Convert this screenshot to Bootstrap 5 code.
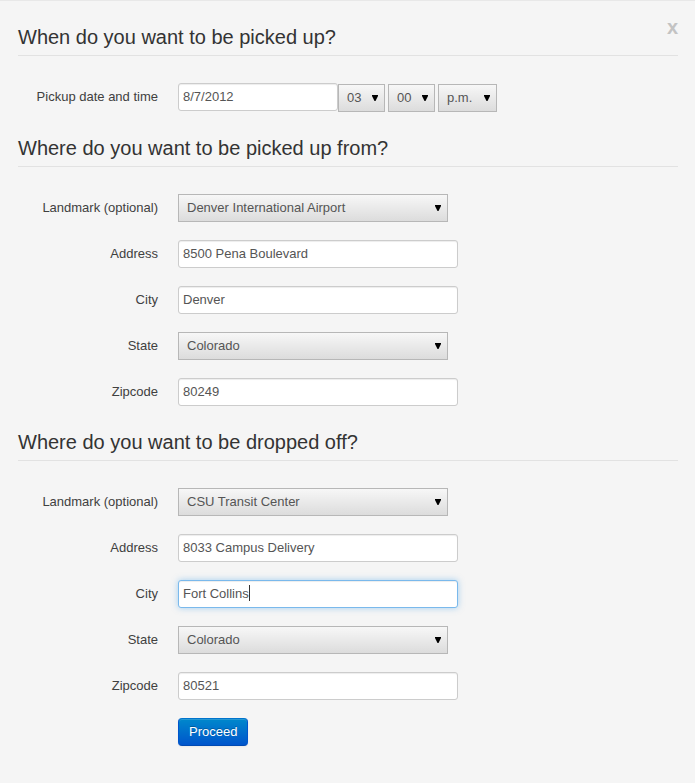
<!DOCTYPE html>
<html lang="en">
<head>
<meta charset="utf-8">
<meta name="viewport" content="width=device-width, initial-scale=1">
<title>Book a ride</title>
<link href="https://cdn.jsdelivr.net/npm/bootstrap@5.3.0/dist/css/bootstrap.min.css" rel="stylesheet">
<style>
body { background: #f5f5f5; color: #333; font: 13px/18px "Liberation Sans", Arial, sans-serif; }
.booking { padding: 18px 17px 36px 18px; border-top: 1px solid #e8e8e8; }
.section-title { font-size: 20px; line-height: 36px; color: #333; border-bottom: 1px solid #e2e2e2; margin-bottom: 27px; }
.field-row { display: flex; align-items: flex-start; gap: 20px; margin-bottom: 18px; }
.field-label { flex: 0 0 140px; text-align: right; padding-top: 5px; color: #404040; }
.form-control.field-text { width: 280px; height: 28px; padding: 3px 4px 5px; font-size: 13px; line-height: 18px; color: #555; border: 1px solid #ccc; border-radius: 3px; box-shadow: inset 0 1px 1px rgba(0,0,0,.075); }
.form-control.field-date { width: 160px; }
.form-control.field-active { border-color: #7ab9ec; box-shadow: inset 0 1px 1px rgba(0,0,0,.075), 0 0 6px rgba(82,168,236,.5); background: linear-gradient(#333, #333) 70px 4px / 1px 16px no-repeat #fff; }
.form-select.field-pick { width: 270px; height: 28px; padding: 0 18px 0 8px; font-size: 13px; line-height: 18px; color: #555; border: 1px solid #b7b7b7; border-radius: 0;
  background: url("data:image/svg+xml,%3Csvg xmlns='http://www.w3.org/2000/svg' viewBox='0 0 6 6'%3E%3Cpath d='M0 0h6v1L3.5 6h-1L0 1z'/%3E%3C/svg%3E") right 6px center / 6px 6px no-repeat, linear-gradient(#f7f7f7, #dcdcdc); }
.form-select.pick-number { width: 47px; }
.form-select.pick-period { width: 59px; }
.time-picks { gap: 3px; padding-top: 1px; }
.submit-row { padding-left: 160px; }
.btn.proceed { height: 28px; padding: 4px 10px; font-size: 13px; line-height: 18px; color: #fff; text-shadow: 0 -1px 0 rgba(0,0,0,.25); border: 1px solid; border-color: #0074cc #05c #004ab3; border-radius: 4px; background: linear-gradient(#08c, #05c); box-shadow: inset 0 1px 0 rgba(255,255,255,.15), 0 1px 2px rgba(0,0,0,.05); }
.dismiss { top: 17px; right: 17px; font-size: 20px; line-height: 18px; font-weight: 700; color: #c3c3c3; }
</style>
<script src="https://cdn.jsdelivr.net/npm/bootstrap@5.3.0/dist/js/bootstrap.bundle.min.js" defer></script>
</head>
<body>
<form class="booking position-relative">
  <button type="button" class="dismiss position-absolute border-0 bg-transparent p-0" aria-label="Close">x</button>
  <fieldset>
    <legend class="section-title float-none">When do you want to be picked up?</legend>
    <div class="field-row">
      <label class="field-label" for="pickup-date">Pickup date and time</label>
      <div class="d-flex">
        <input class="form-control field-text field-date" id="pickup-date" type="text" value="8/7/2012">
        <div class="time-picks d-flex">
          <select class="form-select field-pick pick-number" aria-label="Hour"><option>03</option></select>
          <select class="form-select field-pick pick-number" aria-label="Minute"><option>00</option></select>
          <select class="form-select field-pick pick-period" aria-label="Period"><option>p.m.</option><option>a.m.</option></select>
        </div>
      </div>
    </div>
  </fieldset>
  <fieldset>
    <legend class="section-title float-none">Where do you want to be picked up from?</legend>
    <div class="field-row">
      <label class="field-label" for="from-landmark">Landmark (optional)</label>
      <select class="form-select field-pick" id="from-landmark"><option>Denver International Airport</option></select>
    </div>
    <div class="field-row">
      <label class="field-label" for="from-address">Address</label>
      <input class="form-control field-text" id="from-address" type="text" value="8500 Pena Boulevard">
    </div>
    <div class="field-row">
      <label class="field-label" for="from-city">City</label>
      <input class="form-control field-text" id="from-city" type="text" value="Denver">
    </div>
    <div class="field-row">
      <label class="field-label" for="from-state">State</label>
      <select class="form-select field-pick" id="from-state"><option>Colorado</option></select>
    </div>
    <div class="field-row">
      <label class="field-label" for="from-zip">Zipcode</label>
      <input class="form-control field-text" id="from-zip" type="text" value="80249">
    </div>
  </fieldset>
  <fieldset>
    <legend class="section-title float-none">Where do you want to be dropped off?</legend>
    <div class="field-row">
      <label class="field-label" for="to-landmark">Landmark (optional)</label>
      <select class="form-select field-pick" id="to-landmark"><option>CSU Transit Center</option></select>
    </div>
    <div class="field-row">
      <label class="field-label" for="to-address">Address</label>
      <input class="form-control field-text" id="to-address" type="text" value="8033 Campus Delivery">
    </div>
    <div class="field-row">
      <label class="field-label" for="to-city">City</label>
      <input class="form-control field-text field-active" id="to-city" type="text" value="Fort Collins">
    </div>
    <div class="field-row">
      <label class="field-label" for="to-state">State</label>
      <select class="form-select field-pick" id="to-state"><option>Colorado</option></select>
    </div>
    <div class="field-row">
      <label class="field-label" for="to-zip">Zipcode</label>
      <input class="form-control field-text" id="to-zip" type="text" value="80521">
    </div>
  </fieldset>
  <div class="submit-row d-flex">
    <button type="submit" class="btn proceed">Proceed</button>
  </div>
</form>
</body>
</html>
